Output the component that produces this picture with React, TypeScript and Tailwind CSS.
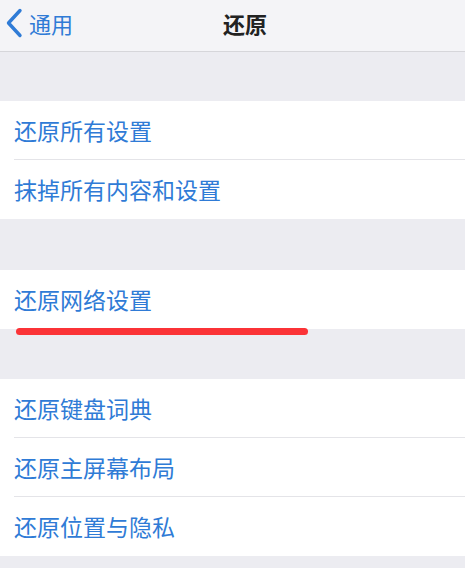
import { ReactNode } from "react";

const font = {
  fontFamily: '"Noto Sans CJK SC", "Noto Sans", sans-serif',
};

const Row = ({ label, last = false }: { label: string; last?: boolean }) => (
  <div className="relative flex h-[59px] items-center bg-white pl-[14px]">
    <span className="text-[23px] leading-none text-[#2f7bd6]">{label}</span>
    {!last && (
      <div className="absolute bottom-0 left-[14px] right-0 h-px bg-[#e4e4e8]" />
    )}
  </div>
);

const Group = ({ children }: { children: ReactNode }) => (
  <div className="flex flex-col">{children}</div>
);

export default function App() {
  return (
    <div className="h-[568px] w-[465px] overflow-hidden bg-[#ececf1]" style={font}>
      {/* nav bar */}
      <div className="relative flex h-[52px] items-center border-b border-[#d6d6da] bg-[#f4f4f7] pb-[6px]">
        <div className="flex items-center pl-[5px]">
          <svg width="18" height="30" viewBox="0 0 18 30" fill="none">
            <path
              d="M15 2.5L3.5 15L15 27.5"
              stroke="#2f7bd6"
              strokeWidth="3.4"
              strokeLinecap="round"
              strokeLinejoin="round"
            />
          </svg>
          <span className="ml-[6px] text-[22px] leading-none text-[#2f7bd6]">通用</span>
        </div>
        <div className="pointer-events-none absolute inset-x-0 top-0 flex h-[45px] items-center justify-center">
          <span className="ml-[25px] text-[22px] font-bold leading-none text-[#222]">还原</span>
        </div>
      </div>

      <div className="h-[49px]" />
      <Group>
        <Row label="还原所有设置" />
        <Row label="抹掉所有内容和设置" last />
      </Group>

      <div className="h-[51px]" />
      <Group>
        <div className="relative">
          <Row label="还原网络设置" last />
          <div className="absolute left-[16px] top-[58px] h-[7px] w-[292px] rounded-full bg-[#fb3337]" />
        </div>
      </Group>

      <div className="h-[50px]" />
      <Group>
        <Row label="还原键盘词典" />
        <Row label="还原主屏幕布局" />
        <Row label="还原位置与隐私" last />
      </Group>
    </div>
  );
}
